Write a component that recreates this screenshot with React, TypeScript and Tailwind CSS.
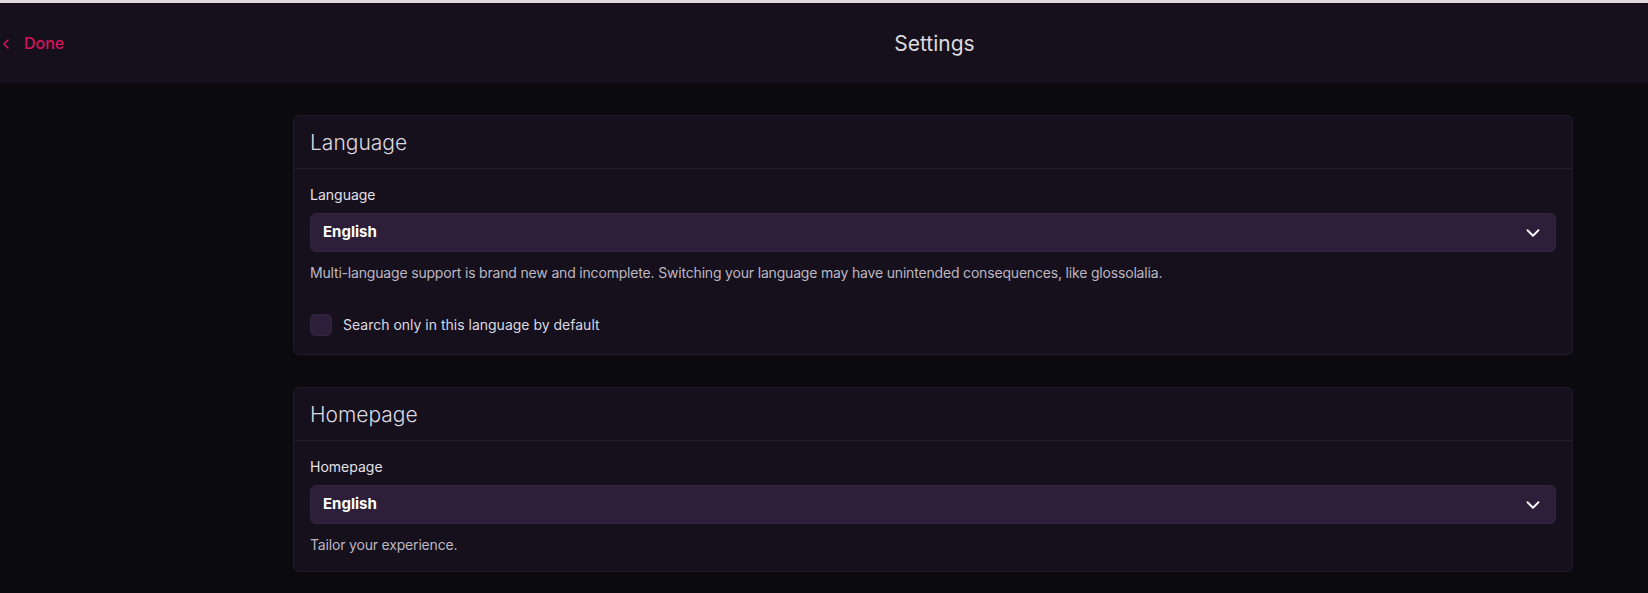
import React, { useState } from 'react';
import { ChevronDown } from 'lucide-react';

const languages = ['English', 'Deutsch', 'Español', 'Français'];

interface SelectFieldProps {
  label: string;
  value: string;
  onChange: (value: string) => void;
  help: string;
}

function SelectField({ label, value, onChange, help }: SelectFieldProps) {
  return (
    <div className="flex flex-col">
      <label className="text-sm leading-5 text-[#e4e0e8]">{label}</label>
      <div className="relative mt-2">
        <select
          value={value}
          onChange={(e) => onChange(e.target.value)}
          className="w-full h-[39px] appearance-none rounded-md border border-[#33263f] bg-[#2d1f3a] pl-3 pr-10 text-[15px] font-bold text-white outline-none"
        >
          {languages.map((lang) => (
            <option key={lang} value={lang}>
              {lang}
            </option>
          ))}
        </select>
        <ChevronDown
          size={22}
          strokeWidth={2}
          className="pointer-events-none absolute right-3 top-1/2 -translate-y-1/2 text-white"
        />
      </div>
      <p className="mt-[11px] text-sm leading-5 tracking-[-0.18px] text-[#bcb7c3]">{help}</p>
    </div>
  );
}

function Card({ title, children }: { title: string; children: React.ReactNode }) {
  return (
    <section className="rounded-md border border-[#221a2c] bg-[#15101c]">
      <h2 className="border-b border-[#241c2f] px-4 pt-[13px] pb-[11px] text-[21px] leading-7 font-light text-[#dcd8e0]">
        {title}
      </h2>
      <div className="p-4">{children}</div>
    </section>
  );
}

export default function App() {
  const [language, setLanguage] = useState('English');
  const [homepage, setHomepage] = useState('English');
  const [searchOnly, setSearchOnly] = useState(false);

  return (
    <div className="min-h-[593px] bg-[#0b0a0f] font-['Inter','Liberation_Sans',sans-serif]">
      <div className="h-[3px] bg-[#e2d9da]" />
      <header className="grid h-20 grid-cols-[293px_1280px] items-center bg-[#15101c]">
        <button className="flex items-center gap-[15px] pl-[3px] text-base font-medium text-[#d6145c]">
          <svg width="6" height="10" viewBox="0 0 6 10" fill="none" className="mt-[1px]">
            <polyline points="5,1 1,5 5,9" stroke="currentColor" strokeWidth="1.6" strokeLinecap="round" strokeLinejoin="round" />
          </svg>
          <span>Done</span>
        </button>
        <h1 className="pt-[2px] pl-[3px] text-center text-[21px] text-[#dcdadf]">Settings</h1>
      </header>

      <main className="grid grid-cols-[293px_1280px] pt-8 pb-6">
        <div />
        <div className="flex flex-col gap-8">
          <Card title="Language">
            <SelectField
              label="Language"
              value={language}
              onChange={setLanguage}
              help="Multi-language support is brand new and incomplete. Switching your language may have unintended consequences, like glossolalia."
            />
            <label className="mt-[29px] flex h-[26px] cursor-pointer items-center gap-[11px]">
              <input
                type="checkbox"
                checked={searchOnly}
                onChange={(e) => setSearchOnly(e.target.checked)}
                className="h-[22px] w-[22px] appearance-none rounded-[5px] border border-[#33263f] bg-[#2d1f3a]"
              />
              <span className="text-sm text-[#dcd8e0]">Search only in this language by default</span>
            </label>
          </Card>

          <Card title="Homepage">
            <SelectField
              label="Homepage"
              value={homepage}
              onChange={setHomepage}
              help="Tailor your experience."
            />
          </Card>
        </div>
      </main>
    </div>
  );
}
